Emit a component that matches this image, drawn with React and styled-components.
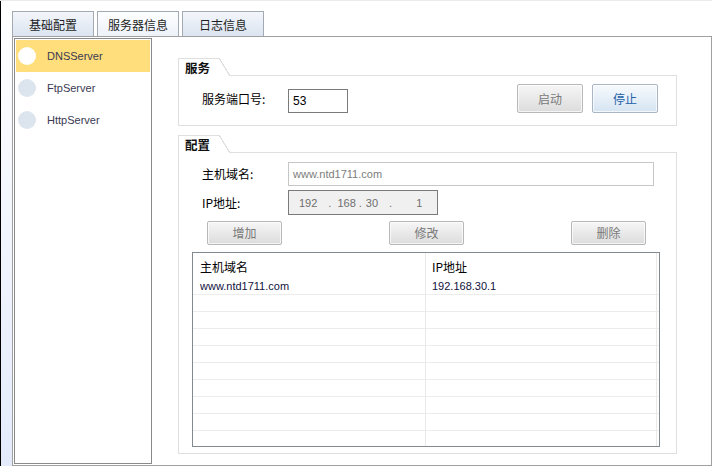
import React from 'react';
import styled, { createGlobalStyle } from 'styled-components';

const GlobalStyle = createGlobalStyle`
  html, body { margin: 0; padding: 0; background: #fff; }
  body {
    width: 712px; height: 466px; overflow: hidden;
    font-family: "Liberation Sans", "Noto Sans CJK SC", sans-serif;
    font-size: 12px; color: #000;
  }
  #root { width: 712px; height: 466px; }
`;

const CJK = `"Noto Sans CJK SC", "Liberation Sans", sans-serif`;
const LATIN = `"Liberation Sans", "Noto Sans CJK SC", sans-serif`;

const Window = styled.div`
  display: flex;
  width: 712px;
  height: 466px;
  box-sizing: border-box;
  border-top: 1px solid #ebebeb;
`;

const Edge = styled.div`
  flex: none;
  width: 11px;
  border-left: 1px solid #000;
  background: linear-gradient(#ffffff, #e3ebfb);
`;

const Main = styled.div`
  flex: 1;
  display: flex;
  flex-direction: column;
  padding-top: 10px;
  min-width: 0;
`;

const TabBar = styled.div`
  display: flex;
  gap: 3px;
  height: 25px;
`;

const Tab = styled.div`
  width: 82px;
  box-sizing: border-box;
  border: 1px solid #a3aab3;
  border-bottom: none;
  background: ${p => p.$active
    ? 'linear-gradient(#fdfeff, #edf2f9)'
    : 'linear-gradient(#f3f6fb, #dbe4f0)'};
  display: flex;
  align-items: center;
  justify-content: center;
  font-family: ${CJK};
  font-size: 12px;
  line-height: 14px;
  color: #1e1e1e;
  padding-top: 1px;
`;

const Panel = styled.div`
  flex: 1;
  display: flex;
  box-sizing: border-box;
  border: 1px solid #a0a0a0;
  padding: 1px;
  background: #fff;
  min-height: 0;
`;

const ServerList = styled.div`
  flex: none;
  width: 138px;
  box-sizing: border-box;
  border: 1px solid #8a8a8a;
  padding: 1px;
  display: flex;
  flex-direction: column;
`;

const ServerItem = styled.div`
  height: 32px;
  display: flex;
  align-items: center;
  gap: 11px;
  padding-left: 2px;
  background: ${p => (p.$active ? '#ffde7b' : 'transparent')};
  font-family: ${LATIN};
  font-size: 11px;
  color: #3a3a52;
`;

const Bullet = styled.span`
  width: 18px;
  height: 18px;
  border-radius: 50%;
  background: ${p => (p.$active ? '#ffffff' : '#dce4ee')};
`;

const Content = styled.div`
  flex: 1;
  display: flex;
  flex-direction: column;
  padding: 20px 33px 0 26px;
  min-width: 0;
`;

const Group = styled.section`
  display: flex;
  flex-direction: column;
  margin-top: ${p => p.$gap || 0}px;
`;

const GroupHead = styled.div`
  display: flex;
  height: 18px;
`;

const GroupTitle = styled.div`
  width: 41px;
  box-sizing: border-box;
  border-left: 1px solid #dfdfdf;
  border-top: 1px solid #dfdfdf;
  padding: 1px 0 0 6px;
  font-family: ${CJK};
  font-weight: bold;
  font-size: 12.5px;
  line-height: 16px;
  color: #111;
`;

const GroupSlant = styled.div`
  width: 11px;
  background: linear-gradient(to top right, transparent calc(50% - 0.7px), #dfdfdf calc(50% - 0.5px), #dfdfdf calc(50% + 0.5px), transparent calc(50% + 0.7px));
`;

const GroupRest = styled.div`
  flex: 1;
  border-bottom: 1px solid #dfdfdf;
`;

const GroupBody = styled.div`
  display: flex;
  flex-direction: column;
  border: 1px solid #dfdfdf;
  border-top: none;
  padding: ${p => p.$pad};
`;

const Row = styled.div`
  display: flex;
  align-items: center;
  margin-top: ${p => p.$gap || 0}px;
  padding-left: ${p => p.$left || 0}px;
  padding-right: ${p => p.$right || 0}px;
  justify-content: ${p => p.$justify || 'flex-start'};
`;

const Label = styled.span`
  flex: none;
  width: 86px;
  font-family: ${CJK};
  font-size: 12px;
  line-height: 16px;
  color: #000;
`;

const TextBox = styled.div`
  box-sizing: border-box;
  height: ${p => p.$h || 24}px;
  width: ${p => (p.$w ? `${p.$w}px` : 'auto')};
  flex: ${p => (p.$w ? 'none' : '1')};
  align-self: ${p => p.$self || 'auto'};
  border: 1px solid ${p => p.$border || '#7a7a7a'};
  background: ${p => p.$bg || '#fff'};
  color: ${p => p.$color || '#000'};
  display: flex;
  align-items: center;
  padding-left: ${p => p.$padLeft || 4}px;
  font-family: ${LATIN};
  font-size: ${p => p.$size || 11}px;
  white-space: pre;
`;

const Octet = styled.span`
  margin-left: ${p => p.$ml || 0}px;
`;

const Spacer = styled.div`
  flex: 1;
`;

const Button = styled.button`
  box-sizing: border-box;
  width: ${p => p.$w}px;
  height: ${p => p.$h}px;
  margin-left: ${p => p.$ml || 0}px;
  border: 1px solid ${p => (p.$blue ? '#a9b4c4' : '#b8b8b8')};
  border-radius: 2px;
  background: ${p => (p.$blue
    ? 'linear-gradient(#f7fafd, #d5e4f2)'
    : 'linear-gradient(#f6f6f6, #dcdcdc)')};
  box-shadow: inset 0 0 0 1px rgba(255,255,255,0.7);
  color: ${p => (p.$blue ? '#2461a9' : '#7a7a7a')};
  font-family: ${CJK};
  font-size: 12px;
  line-height: 14px;
  padding: 0;
  display: flex;
  align-items: center;
  justify-content: center;
`;

const Table = styled.div`
  box-sizing: border-box;
  height: 195px;
  margin-top: 7px;
  border: 1px solid #828a90;
  overflow: hidden;
  display: flex;
  flex-direction: column;
`;

const TableRow = styled.div`
  flex: none;
  display: grid;
  grid-template-columns: 233px 231px 1fr;
  box-sizing: border-box;
  height: ${p => (p.$head ? 25 : 17)}px;
  border-bottom: ${p => (p.$head ? 'none' : '1px solid #ececec')};
`;

const Cell = styled.div`
  box-sizing: border-box;
  border-right: 1px solid ${p => (p.$last ? 'transparent' : '#e9e9e9')};
  padding-left: ${p => p.$pl || 7}px;
  display: flex;
  align-items: center;
  font-family: ${p => (p.$head ? CJK : LATIN)};
  font-size: ${p => (p.$head ? 12 : 11)}px;
  padding-top: ${p => (p.$head ? 2 : 0)}px;
  color: ${p => (p.$head ? '#000' : '#121240')};
  white-space: nowrap;
  overflow: hidden;
`;

const servers = ['DNSServer', 'FtpServer', 'HttpServer'];
const records = [{ host: 'www.ntd1711.com', ip: '192.168.30.1' }];

export default function App() {
  const rows = [...records];
  while (rows.length < 11) rows.push(null);
  return (
    <>
      <GlobalStyle />
      <Window>
        <Edge />
        <Main>
          <TabBar>
            <Tab>基础配置</Tab>
            <Tab $active>服务器信息</Tab>
            <Tab>日志信息</Tab>
          </TabBar>
          <Panel>
            <ServerList>
              {servers.map((s, i) => (
                <ServerItem key={s} $active={i === 0}>
                  <Bullet $active={i === 0} />
                  {s}
                </ServerItem>
              ))}
            </ServerList>
            <Content>
              <Group>
                <GroupHead>
                  <GroupTitle>服务</GroupTitle>
                  <GroupSlant />
                  <GroupRest />
                </GroupHead>
                <GroupBody $pad="8px 18px 12px 23px">
                  <Row style={{ height: 29 }}>
                    <Label>服务端口号:</Label>
                    <TextBox $w={60} $self="flex-end" $size={12}>53</TextBox>
                    <Spacer />
                    <Button $w={66} $h={29}>启动</Button>
                    <Button $w={66} $h={29} $ml={9} $blue>停止</Button>
                  </Row>
                </GroupBody>
              </Group>
              <Group $gap={9}>
                <GroupHead>
                  <GroupTitle>配置</GroupTitle>
                  <GroupSlant />
                  <GroupRest />
                </GroupHead>
                <GroupBody $pad="9px 16px 6px 13px">
                  <Row $left={10} $right={6}>
                    <Label>主机域名:</Label>
                    <TextBox $border="#c6c6c6" $color="#7d7d7d">www.ntd1711.com</TextBox>
                  </Row>
                  <Row $left={10} $gap={4}>
                    <Label>IP地址:</Label>
                    <TextBox $w={150} $h={25} $bg="#f0f0f0" $border="#7a7a7a" $color="#6e6e6e" $padLeft={10}>
                      <Octet>192</Octet>
                      <Octet $ml={11}>.</Octet>
                      <Octet $ml={6}>168</Octet>
                      <Octet $ml={3}>.</Octet>
                      <Octet $ml={4}>30</Octet>
                      <Octet $ml={11}>.</Octet>
                      <Octet $ml={24}>1</Octet>
                    </TextBox>
                  </Row>
                  <Row $gap={6} $left={15} $right={14} $justify="space-between">
                    <Button $w={75} $h={24}>增加</Button>
                    <Button $w={75} $h={24}>修改</Button>
                    <Button $w={75} $h={24}>删除</Button>
                  </Row>
                  <Table>
                    <TableRow $head>
                      <Cell $head>主机域名</Cell>
                      <Cell $head $pl={6}>IP地址</Cell>
                      <Cell $head $last />
                    </TableRow>
                    {rows.map((r, i) => (
                      <TableRow key={i}>
                        <Cell>{r ? r.host : ''}</Cell>
                        <Cell $pl={6}>{r ? r.ip : ''}</Cell>
                        <Cell $last />
                      </TableRow>
                    ))}
                  </Table>
                </GroupBody>
              </Group>
            </Content>
          </Panel>
        </Main>
      </Window>
    </>
  );
}
